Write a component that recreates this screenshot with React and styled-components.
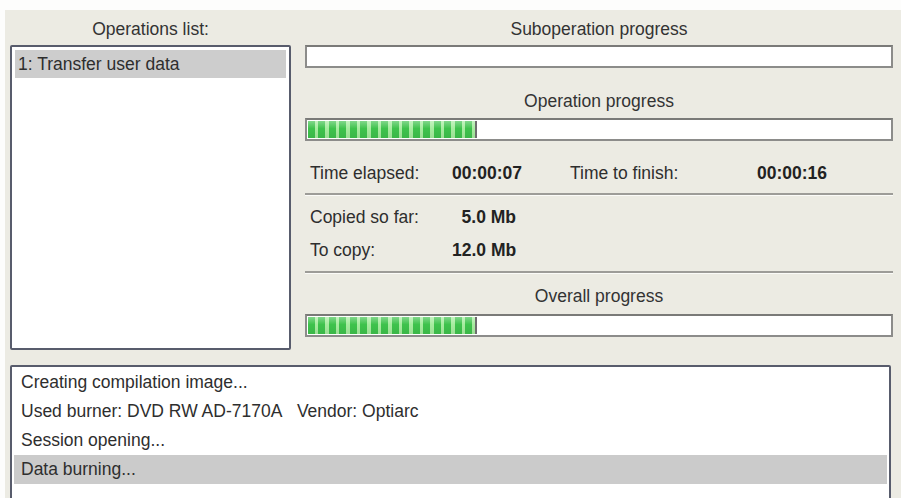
import React from 'react'
import styled, { createGlobalStyle } from 'styled-components'

const GlobalStyle = createGlobalStyle`
  html, body {
    margin: 0;
    padding: 0;
    background: #fdfdfc;
    overflow: hidden;
  }
  body {
    font-family: 'Liberation Sans', Arial, sans-serif;
    font-size: 17.5px;
    color: #2e2e2e;
  }
`

const Screen = styled.div`
  width: 901px;
  height: 498px;
  padding: 10px 0 0 5px;
  box-sizing: border-box;
  overflow: hidden;
`

const Panel = styled.div`
  height: 100%;
  background: #ecebe3;
  padding: 0 8px 0 5px;
  box-sizing: border-box;
  display: flex;
  flex-direction: column;
`

const Top = styled.div`
  display: grid;
  grid-template-columns: 281px 1fr;
  column-gap: 14px;
`

const Column = styled.div`
  display: flex;
  flex-direction: column;
`

const Header = styled.div`
  height: 35px;
  line-height: 22px;
  padding-top: 8px;
  box-sizing: border-box;
  text-align: center;
  color: #333;
`

const ListBox = styled.div`
  height: 305px;
  box-sizing: border-box;
  background: #fff;
  border: 2px solid #585c6c;
  border-radius: 2px;
  padding: 3px;
`

const ListItem = styled.div`
  height: 28px;
  line-height: 28px;
  padding-left: 3px;
  background: ${p => (p.selected ? '#cdcdcd' : 'transparent')};
  white-space: nowrap;
`

const Bar = styled.div`
  height: 23px;
  box-sizing: border-box;
  background: #fff;
  border: 2px solid #8c8c8a;
  border-top-color: #7a7a78;
  margin-top: ${p => p.gap || 0}px;
  display: flex;
  padding: 1px;
`

const Fill = styled.div`
  height: 100%;
  box-sizing: border-box;
  border-right: 2px solid #6d6d6d;
  background:
    linear-gradient(to bottom, rgba(255,255,255,0.35), rgba(255,255,255,0) 45%, rgba(0,0,0,0.06)),
    repeating-linear-gradient(to right, #3ec24c 0 7px, #a6ec9f 7px 10.5px);
`

const Label = styled.div`
  text-align: center;
  line-height: 22px;
  margin-top: ${p => p.gap || 0}px;
  color: #333;
`

const InfoRow = styled.div`
  display: grid;
  grid-template-columns: ${p => p.cols};
  height: 30px;
  line-height: 30px;
  padding-left: 5px;
  margin-top: ${p => p.gap || 0}px;
  white-space: nowrap;
`

const Value = styled.span`
  font-weight: bold;
  color: #222;
  text-align: ${p => (p.right ? 'right' : 'left')};
`

const Separator = styled.div`
  height: 2px;
  background: #9d9c98;
  border-bottom: 1px solid #fbfbf8;
  margin-top: ${p => p.gap || 0}px;
`

const LogBox = styled.div`
  margin: 15px 2px 0 0;
  height: 160px;
  flex-shrink: 0;
  box-sizing: border-box;
  background: #fff;
  border: 2px solid #585c6c;
  border-radius: 2px;
  padding: 1px 2px;
`

const LogLine = styled.div`
  height: 29px;
  line-height: 29px;
  padding-left: 7px;
  background: ${p => (p.selected ? '#cbcbcb' : 'transparent')};
  white-space: nowrap;
`

const Progress = ({ percent, gap }) => (
  <Bar gap={gap}>
    {percent > 0 ? <Fill style={{ width: `${percent}%` }} /> : null}
  </Bar>
)

const logLines = [
  'Creating compilation image...',
  'Used burner: DVD RW AD-7170A   Vendor: Optiarc',
  'Session opening...',
  'Data burning...',
]

const App = () => {
  return (
    <Screen>
      <GlobalStyle />
      <Panel>
        <Top>
          <Column>
            <Header>Operations list:</Header>
            <ListBox>
              <ListItem selected>1: Transfer user data</ListItem>
            </ListBox>
          </Column>
          <Column>
            <Header>Suboperation progress</Header>
            <Progress percent={0} />
            <Label gap={22}>Operation progress</Label>
            <Progress percent={29} gap={6} />
            <InfoRow cols="142px 118px 187px auto" gap={17}>
              <span>Time elapsed:</span>
              <Value>00:00:07</Value>
              <span>Time to finish:</span>
              <Value>00:00:16</Value>
            </InfoRow>
            <Separator gap={5} />
            <InfoRow cols="142px 64px" gap={6}>
              <span>Copied so far:</span>
              <Value right>5.0 Mb</Value>
            </InfoRow>
            <InfoRow cols="142px 64px" gap={3}>
              <span>To copy:</span>
              <Value right>12.0 Mb</Value>
            </InfoRow>
            <Separator gap={6} />
            <Label gap={11}>Overall progress</Label>
            <Progress percent={29} gap={7} />
          </Column>
        </Top>
        <LogBox>
          {logLines.map((line, i) => (
            <LogLine key={i} selected={i === logLines.length - 1}>
              {line.replace(/ {3}/, '\u00a0\u00a0\u00a0')}
            </LogLine>
          ))}
        </LogBox>
      </Panel>
    </Screen>
  )
}

export default App
